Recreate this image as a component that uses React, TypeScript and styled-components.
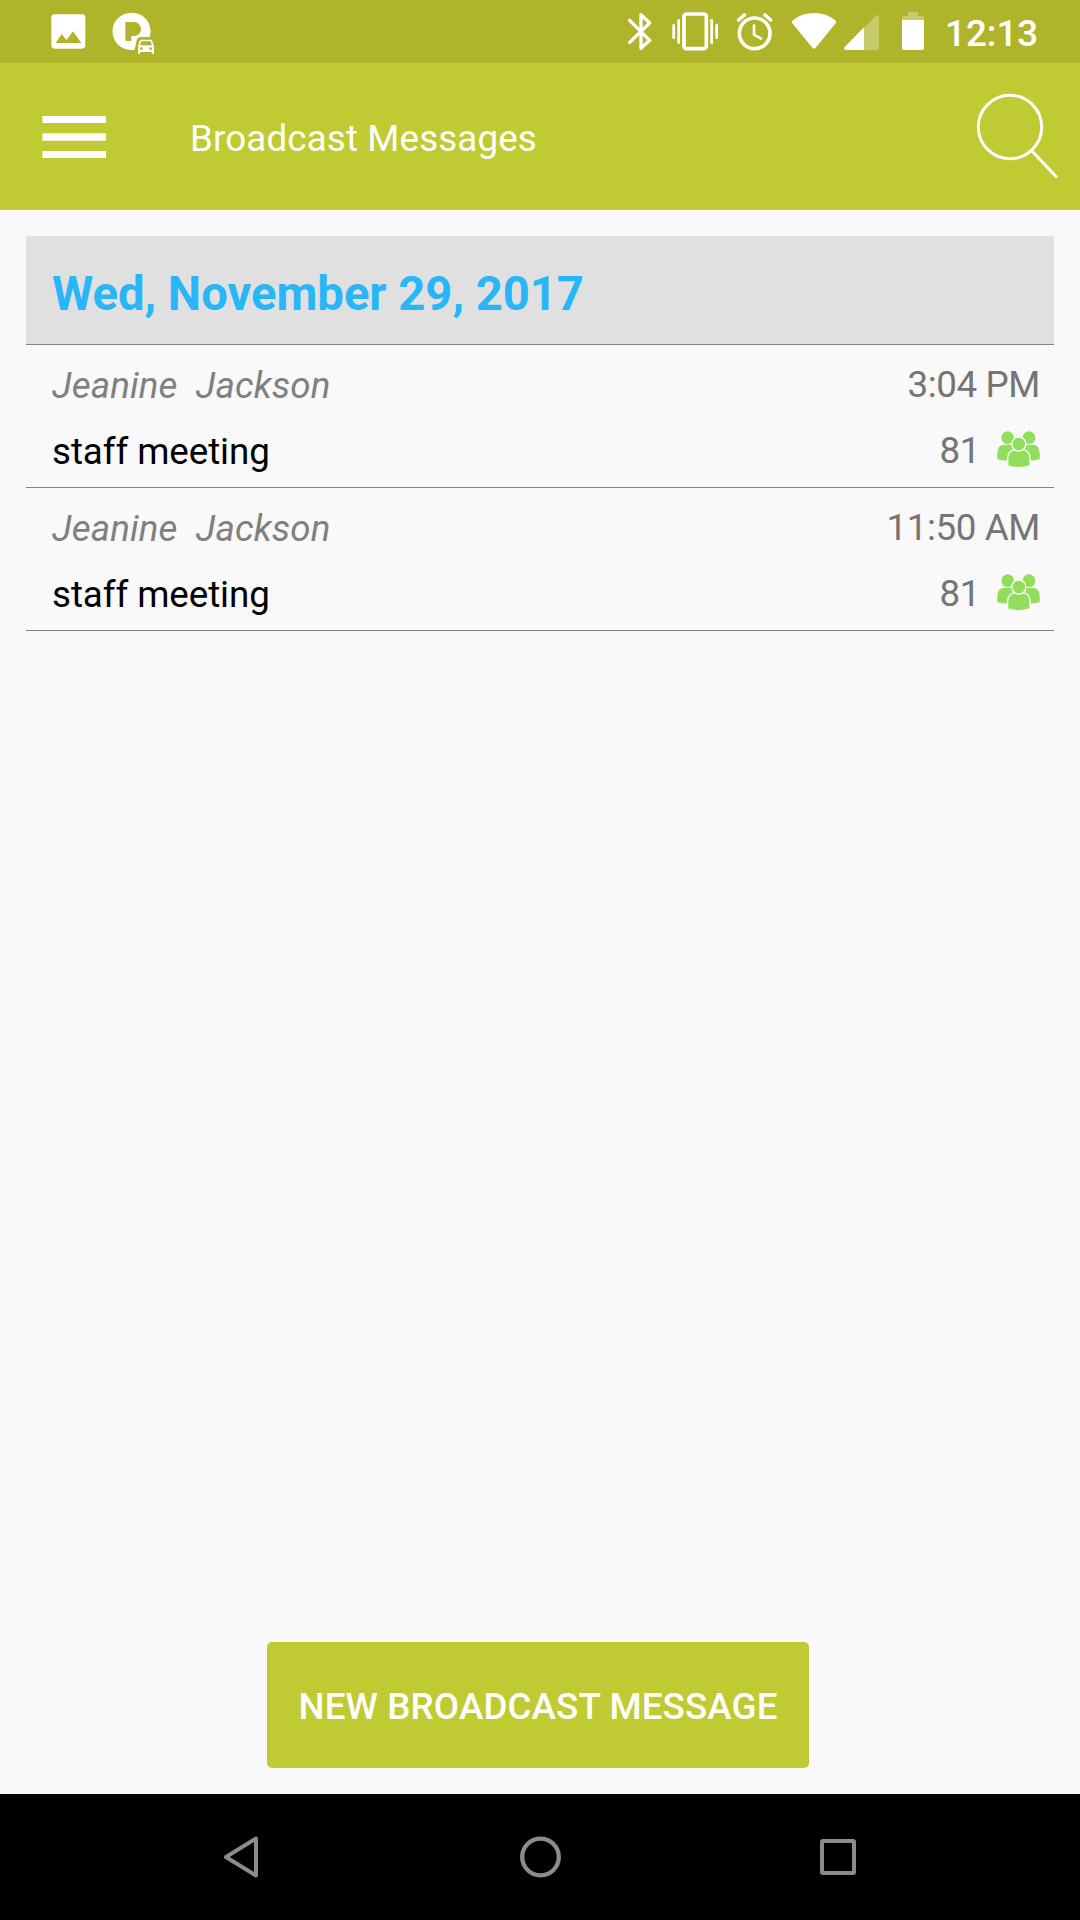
import React from "react";
import styled, { createGlobalStyle } from "styled-components";

const GlobalStyle = createGlobalStyle`
  * { box-sizing: border-box; }
  html, body { margin: 0; padding: 0; }
  body { font-family: Roboto, "Noto Sans", sans-serif; background: #f9f9f9; }
`;

const Screen = styled.div`
  display: flex;
  flex-direction: column;
  width: 1080px;
  height: 1920px;
  overflow: hidden;
  background: #f9f9f9;
  font-size: 36.75px;
  line-height: 43px;
`;

const StatusBar = styled.div`
  display: flex;
  align-items: center;
  justify-content: space-between;
  height: 63px;
  padding: 0 43px 0 51px;
  background: #afb42b;
  color: #fff;
`;

const IconGroup = styled.div`
  display: flex;
  align-items: center;
`;

const StatusIcon = styled.svg<{ $gap: number }>`
  display: block;
  height: 63px;
  margin-right: ${(p) => p.$gap}px;
`;

const Clock = styled.span`
  display: block;
  width: 92px;
  font-size: 36.75px;
  font-weight: 500;
  white-space: nowrap;
  padding-top: 4px;
`;

const AppBar = styled.header`
  display: flex;
  align-items: center;
  height: 147px;
  padding: 0 22px 0 42px;
  background: #c0ca33;
  color: #fff;
`;

const PlainButton = styled.button`
  display: flex;
  align-items: center;
  justify-content: center;
  padding: 0;
  border: 0;
  background: none;
`;

const Title = styled.h1`
  flex: 1;
  margin: 0 0 0 83px;
  padding-top: 4px;
  font-size: 36.75px;
  font-weight: 400;
  letter-spacing: 0.13px;
`;

const Content = styled.main`
  display: flex;
  flex: 1;
  flex-direction: column;
  padding: 26px 26px 26px;
`;

const DateHeader = styled.h2`
  height: 109px;
  margin: 0;
  padding: 30px 26px 0;
  border-bottom: 1px solid #808080;
  background: #e0e0e0;
  color: #29b6f6;
  font-size: 47.25px;
  font-weight: 700;
  line-height: 56px;
  letter-spacing: -0.05px;
`;

const MessageRow = styled.article`
  display: flex;
  justify-content: space-between;
  height: 143px;
  padding: 19px 14px 0 26px;
  border-bottom: 1px solid #808080;
`;

const Column = styled.div<{ $end?: boolean }>`
  display: flex;
  flex-direction: column;
  align-items: ${(p) => (p.$end ? "flex-end" : "flex-start")};
  gap: 23px;
  margin-top: ${(p) => (p.$end ? "-1px" : "0")};
`;

const Sender = styled.span`
  color: #808080;
  font-style: italic;
  white-space: pre;
  letter-spacing: 0.08px;
`;

const Subject = styled.span`
  color: #000;
  letter-spacing: -0.08px;
`;

const Meta = styled.span`
  display: flex;
  align-items: center;
  gap: 17px;
  color: #757575;
  letter-spacing: -0.4px;
`;

const PeopleSvg = styled.svg`
  display: block;
  width: 43px;
  height: 37px;
  margin: 0 0 2px;
`;

const NewMessageButton = styled.button`
  width: 542px;
  height: 126px;
  margin: auto 0 0 241px;
  padding: 2px 0 0;
  border: 0;
  border-radius: 5px;
  background: #c0ca33;
  color: #fff;
  font: 500 36.75px/43px Roboto, "Noto Sans", sans-serif;
  letter-spacing: 0.12px;
  text-transform: uppercase;
  white-space: nowrap;
`;

const NavBar = styled.nav`
  display: flex;
  align-items: center;
  justify-content: space-between;
  height: 126px;
  padding: 0 220px 0 219px;
  background: #000;
`;

const PictureIcon = () => (
  <StatusIcon $gap={25} width="36" viewBox="63 0 108 189">
    <path
      fill="#fff"
      fillRule="evenodd"
      d="M74 43H156Q166 43 166 53V136Q166 146 156 146H74Q64 146 64 136V53Q64 43 74 43ZM77 129H154L129 94L109 120L95 102Z"
    />
  </StatusIcon>
);

const ParkingIcon = () => (
  <StatusIcon $gap={0} width="43" viewBox="246 0 129 189">
    <path
      fill="#fff"
      fillRule="evenodd"
      d="M304 38A56 56 0 0 1 359 111H333Q323 111 320 121L314 149A56 56 0 1 1 304 38ZM286 66V123H304V108H312A21 21 0 0 0 312 66Z"
    />
    <path
      fill="#fff"
      fillRule="evenodd"
      d="M334 119H362Q366 119 367 123L372 138V161H365V156H331V161H324V138L329 123Q330 119 334 119ZM334 124L330 136H366L362 124ZM334 142A4 4 0 1 0 334 150A4 4 0 1 0 334 142ZM362 142A4 4 0 1 0 362 150A4 4 0 1 0 362 142Z"
    />
  </StatusIcon>
);

const BluetoothIcon = () => (
  <StatusIcon $gap={20} width="24" viewBox="54 0 72 189">
    <path
      fill="none"
      stroke="#fff"
      strokeWidth="10"
      strokeLinecap="round"
      strokeLinejoin="round"
      d="M59 61L119 121L93 145V44L119 69L59 127"
    />
  </StatusIcon>
);

const VibrateIcon = () => (
  <StatusIcon $gap={17} width="47" viewBox="186 0 141 189">
    <rect x="222" y="42" width="67" height="104" rx="7" fill="none" stroke="#fff" strokeWidth="11" />
    <path
      stroke="#fff"
      strokeWidth="8"
      strokeLinecap="round"
      d="M191 76V113M206 61V128M305 61V128M320 76V113"
    />
  </StatusIcon>
);

const AlarmIcon = () => (
  <StatusIcon $gap={17} width="38" viewBox="378 0 114 189">
    <circle cx="434" cy="100" r="46" fill="none" stroke="#fff" strokeWidth="11" />
    <path
      fill="none"
      stroke="#fff"
      strokeWidth="11"
      strokeLinecap="round"
      d="M386 60L403 45M465 45L482 60"
    />
    <path
      fill="none"
      stroke="#fff"
      strokeWidth="8"
      strokeLinecap="round"
      strokeLinejoin="round"
      d="M432 77V104L453 116"
    />
  </StatusIcon>
);

const WifiIcon = () => (
  <StatusIcon $gap={7} width="46" viewBox="543 0 138 189">
    <path
      fill="#fff"
      d="M548 61Q575 39 612 39T676 61Q681 65 677 70L617 143Q612 149 607 143L547 70Q543 65 548 61Z"
    />
  </StatusIcon>
);

const SignalIcon = () => (
  <StatusIcon $gap={23} width="35" viewBox="42 0 105 189">
    <path fill="#fff" fillOpacity=".3" d="M102 83L138 47Q147 40 147 50V145Q147 150 142 150H102Z" />
    <path fill="#fff" d="M102 82V150H47Q39 150 44 141Z" />
  </StatusIcon>
);

const BatteryIcon = () => (
  <StatusIcon $gap={21} width="22" viewBox="216 0 66 189">
    <path fill="#fff" fillOpacity=".3" d="M216 60V53Q216 48 221 48H234V36H264V48H277Q282 48 282 53V60Z" />
    <path fill="#fff" d="M216 60H282V145Q282 150 277 150H221Q216 150 216 145Z" />
  </StatusIcon>
);

const MenuIcon = () => (
  <svg width="65" height="44" viewBox="0 0 65 44">
    <path fill="#fff" d="M.4 1H64V8H.4ZM.4 18.3H64V25.7H.4ZM.4 36H64V43H.4Z" />
  </svg>
);

const SearchIcon = () => (
  <svg width="82" height="88" viewBox="0 0 82 88">
    <g fill="none" stroke="#fff" strokeWidth="3" strokeLinecap="round">
      <circle cx="34" cy="34" r="31.7" />
      <path d="M56 58L80 83.5" />
    </g>
  </svg>
);

const PeopleIcon = () => (
  <PeopleSvg viewBox="410 302 129 111">
    <g fill="#92dd5b">
      <circle cx="442" cy="322" r="19" />
      <circle cx="506" cy="322" r="19" />
      <path d="M411 387V368Q411 343 434 343H456L462 389Q432 393 411 387Z" />
      <path d="M538 387V368Q538 343 515 343H494L488 389Q517 393 538 387Z" />
    </g>
    <g fill="#92dd5b" stroke="#f9f9f9" strokeWidth="4">
      <path d="M442 407V386Q442 358 468 358H484Q509 358 509 386V407Q475 417 442 407Z" />
      <circle cx="475.500" cy="341" r="21" />
    </g>
  </PeopleSvg>
);

const messages = [
  { sender: "Jeanine  Jackson", subject: "staff meeting", time: "3:04 PM", count: 81 },
  { sender: "Jeanine  Jackson", subject: "staff meeting", time: "11:50 AM", count: 81 },
];

export default function App() {
  return (
    <Screen>
      <GlobalStyle />
      <StatusBar>
        <IconGroup>
          <PictureIcon />
          <ParkingIcon />
        </IconGroup>
        <IconGroup>
          <BluetoothIcon />
          <VibrateIcon />
          <AlarmIcon />
          <WifiIcon />
          <SignalIcon />
          <BatteryIcon />
          <Clock>12:13</Clock>
        </IconGroup>
      </StatusBar>
      <AppBar>
        <PlainButton aria-label="Menu">
          <MenuIcon />
        </PlainButton>
        <Title>Broadcast Messages</Title>
        <PlainButton aria-label="Search">
          <SearchIcon />
        </PlainButton>
      </AppBar>
      <Content>
        <DateHeader>Wed, November 29, 2017</DateHeader>
        {messages.map((m) => (
          <MessageRow key={m.time}>
            <Column>
              <Sender>{m.sender}</Sender>
              <Subject>{m.subject}</Subject>
            </Column>
            <Column $end>
              <Meta>{m.time}</Meta>
              <Meta>
                {m.count}
                <PeopleIcon />
              </Meta>
            </Column>
          </MessageRow>
        ))}
        <NewMessageButton>New Broadcast Message</NewMessageButton>
      </Content>
      <NavBar>
        <PlainButton aria-label="Back">
          <svg width="44" height="44" viewBox="0 0 44 44">
            <path
              d="M37 3.500V40.500L7 22Z"
              fill="none"
              stroke="#8b8b8b"
              strokeWidth="4"
              strokeLinejoin="round"
            />
          </svg>
        </PlainButton>
        <PlainButton aria-label="Home">
          <svg width="44" height="44" viewBox="0 0 44 44">
            <circle cx="22.500" cy="22" r="18.300" fill="none" stroke="#8b8b8b" strokeWidth="4.300" />
          </svg>
        </PlainButton>
        <PlainButton aria-label="Recent apps">
          <svg width="44" height="44" viewBox="0 0 44 44">
            <rect x="6" y="6" width="32" height="32" rx="1" fill="none" stroke="#8b8b8b" strokeWidth="4" />
          </svg>
        </PlainButton>
      </NavBar>
    </Screen>
  );
}
